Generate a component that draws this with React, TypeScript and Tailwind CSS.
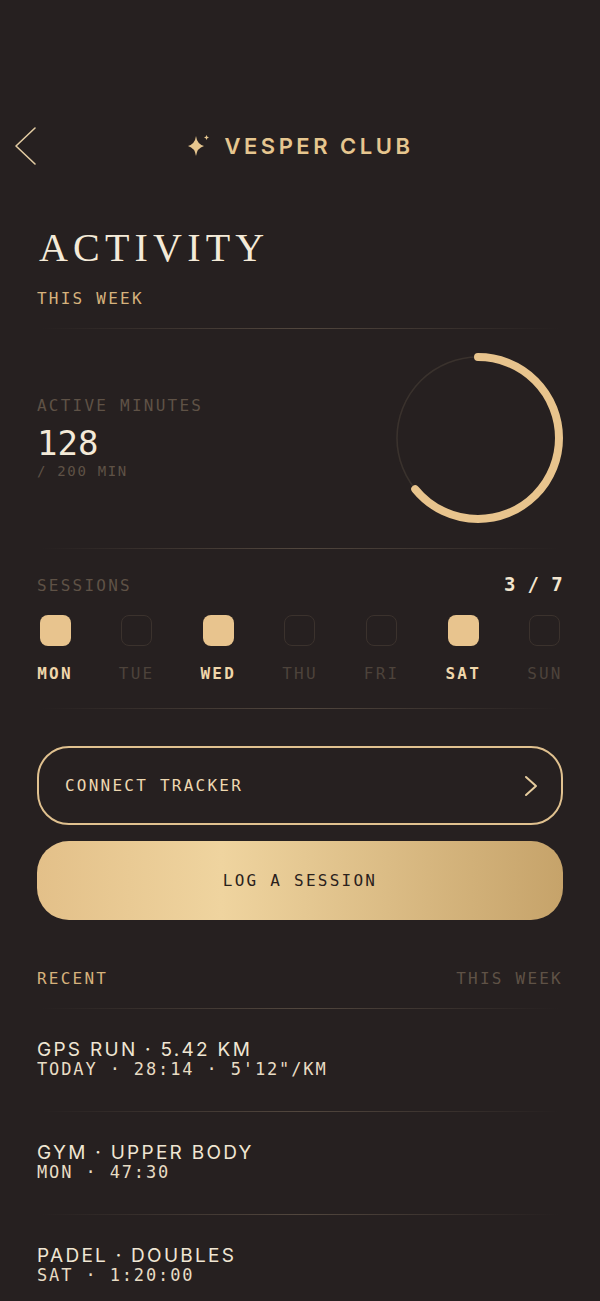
import type { ReactNode } from 'react';

// ─── Shared bits ──────────────────────────────────────────────────────────────

const MONO = 'font-["DejaVu_Sans_Mono","Liberation_Mono",monospace]';

function Divider({ className = '' }: { className?: string }) {
  return (
    <div
      className={`h-px mx-[4px] bg-linear-to-r from-transparent via-[#52473e] to-transparent ${className}`}
    />
  );
}

function Label({ children, className = '' }: { children: ReactNode; className?: string }) {
  return (
    <p className={`${MONO} text-[16px] leading-[16px] tracking-[0.14em] ${className}`}>
      {children}
    </p>
  );
}

// ─── Icons ────────────────────────────────────────────────────────────────────

function Sparkle() {
  return (
    <svg width="26" height="26" viewBox="0 0 26 26" className="flex-shrink-0">
      <path
        d="M10 3 Q11 11 18 13 Q11 15 10 23 Q9 15 2 13 Q9 11 10 3 Z"
        fill="#e6c68f"
      />
      <path
        d="M20.5 2 Q20.9 4.1 23 4.5 Q20.9 4.9 20.5 7 Q20.1 4.9 18 4.5 Q20.1 4.1 20.5 2 Z"
        fill="#e6c68f"
      />
    </svg>
  );
}

function BackChevron() {
  return (
    <svg width="24" height="40" viewBox="0 0 24 40" fill="none">
      <path d="M21 2 L2 20 L21 38" stroke="#e2cba2" strokeWidth="1.6" strokeLinecap="round" strokeLinejoin="round" />
    </svg>
  );
}

function ProgressRing({ value, max }: { value: number; max: number }) {
  const r = 81;
  const c = 2 * Math.PI * r;
  const pct = value / max;
  return (
    <svg width="172" height="172" viewBox="0 0 172 172" className="flex-shrink-0 -mr-[1px]">
      <circle cx="86" cy="86" r={r} fill="none" stroke="#3a322d" strokeWidth="1.6" />
      <circle
        cx="86"
        cy="86"
        r={r}
        fill="none"
        stroke="#e8c48d"
        strokeWidth="8"
        strokeLinecap="round"
        strokeDasharray={`${c * pct} ${c}`}
        transform="rotate(-90 86 86)"
      />
    </svg>
  );
}

// ─── Data ─────────────────────────────────────────────────────────────────────

const DAYS = [
  { d: 'MON', on: true },
  { d: 'TUE', on: false },
  { d: 'WED', on: true },
  { d: 'THU', on: false },
  { d: 'FRI', on: false },
  { d: 'SAT', on: true },
  { d: 'SUN', on: false },
];

const RECENT = [
  { title: 'GPS RUN · 5.42 KM', sub: 'TODAY · 28:14 · 5\'12"/KM' },
  { title: 'GYM · UPPER BODY', sub: 'MON · 47:30' },
  { title: 'PADEL · DOUBLES', sub: 'SAT · 1:20:00' },
];

// ─── App ──────────────────────────────────────────────────────────────────────

export default function App() {
  return (
    <div className="min-h-[1301px] w-full bg-[#262020] overflow-hidden">
      {/* ── Header ── */}
      <div className="mt-[126px] h-[40px] px-[14px] grid grid-cols-[40px_1fr_40px] items-center">
        <BackChevron />
        <div className="flex items-center justify-center gap-[12px]">
          <Sparkle />
          <span className='font-["Inter",sans-serif] font-semibold text-[22px] leading-none tracking-[0.16em] text-[#e6c68f]'>
            VESPER CLUB
          </span>
        </div>
        <div />
      </div>

      <div className="px-[37px]">
        {/* ── Title ── */}
        <h1 className='mt-[62px] pl-[2px] font-["Liberation_Serif",serif] text-[40px] leading-[40px] tracking-[0.13em] text-[#f4ead8]'>
          ACTIVITY
        </h1>
        <Label className="mt-[23px] text-[#d6b27c]">THIS WEEK</Label>
        <Divider className="mt-[21px]" />

        {/* ── Active minutes ── */}
        <div className="mt-[23px] flex items-center justify-between">
          <div>
            <Label className="text-[#5f5246]">ACTIVE MINUTES</Label>
            <p className={`${MONO} mt-[12px] text-[34px] leading-[34px] text-[#f4ead8]`}>128</p>
            <p className={`${MONO} mt-[4px] text-[14px] leading-[14px] tracking-[0.12em] text-[#5f5246]`}>
              / 200 MIN
            </p>
          </div>
          <ProgressRing value={128} max={200} />
        </div>
        <Divider className="mt-[24px]" />

        {/* ── Sessions ── */}
        <div className="mt-[27px] flex items-baseline justify-between">
          <Label className="text-[#5f5246]">SESSIONS</Label>
          <span className={`${MONO} font-bold text-[19px] leading-[16px] tracking-[0.02em] text-[#f3e6cf]`}>
            3 / 7
          </span>
        </div>
        <div className="mt-[21px] flex justify-between">
          {DAYS.map(({ d, on }) => (
            <div key={d} className="w-[36px] flex flex-col items-center">
              <div
                className={
                  on
                    ? 'w-[31px] h-[31px] rounded-[8px] bg-[#e8c48e]'
                    : 'w-[31px] h-[31px] rounded-[8px] border-[1.5px] border-[#3b322d]'
                }
              />
              <Label className={on ? 'mt-[20px] font-bold text-[#efd6aa]' : 'mt-[20px] text-[#4d433b]'}>
                {d}
              </Label>
            </div>
          ))}
        </div>
        <Divider className="mt-[26px]" />

        {/* ── Actions ── */}
        <button className="mt-[37px] w-full h-[79px] rounded-[32px] border-2 border-[#e0c18f] pl-[26px] pr-[23px] flex items-center justify-between">
          <Label className="text-[#eed8b0]">CONNECT TRACKER</Label>
          <svg width="14" height="22" viewBox="0 0 14 22" fill="none">
            <path d="M2 2 L12 11 L2 20" stroke="#e6cc9e" strokeWidth="2" strokeLinecap="round" strokeLinejoin="round" />
          </svg>
        </button>
        <button className="mt-[16px] w-full h-[79px] rounded-[32px] bg-linear-to-r from-[#e3c089] via-[#efd49f] via-35% to-[#c6a36a] flex items-center justify-center">
          <Label className="text-[#2a211c]">LOG A SESSION</Label>
        </button>

        {/* ── Recent ── */}
        <div className="mt-[51px] flex justify-between">
          <Label className="text-[#d6b27c]">RECENT</Label>
          <Label className="text-[#5f5246]">THIS WEEK</Label>
        </div>
        <Divider className="mt-[21px]" />

        {RECENT.map((item, i) => (
          <div key={item.title}>
            <div className="pt-[31px] pb-[33px]">
              <p className='font-["Inter",sans-serif] text-[19px] leading-[19px] tracking-[0.12em] text-[#f0e6d3]'>
                {item.title}
              </p>
              <p className={`${MONO} mt-[2px] text-[17px] leading-[17px] tracking-[0.11em] text-[#e8dcc4]`}>
                {item.sub}
              </p>
            </div>
            {i < RECENT.length - 1 && <Divider />}
          </div>
        ))}
      </div>
    </div>
  );
}
